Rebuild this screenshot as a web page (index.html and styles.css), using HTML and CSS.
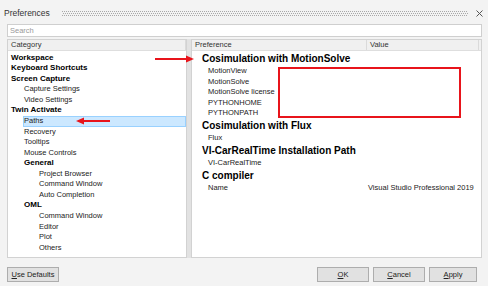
FILE: index.html
```html
<!DOCTYPE html>
<html>
<head>
<meta charset="utf-8">
<link rel="stylesheet" href="styles.css">
</head>
<body>
<div class="app">
  <div class="titlebar">
    <span class="title">Preferences</span>
    <span class="grip"></span>
    <svg class="close" width="7" height="7" viewBox="0 0 7 7"><path d="M0.5 0.5L6.5 6.5M6.5 0.5L0.5 6.5" stroke="#555" stroke-width="1"/></svg>
  </div>
  <div class="search">Search</div>
  <div class="panels">
    <div class="panel left">
      <div class="head"><span class="hcell">Category</span></div>
      <div class="tree">
        <div class="node l0 b">Workspace</div>
        <div class="node l0 b">Keyboard Shortcuts</div>
        <div class="node l0 b">Screen Capture</div>
        <div class="node l1">Capture Settings</div>
        <div class="node l1">Video Settings</div>
        <div class="node l0 b">Twin Activate</div>
        <div class="node l1 sel">Paths</div>
        <div class="node l1">Recovery</div>
        <div class="node l1">Tooltips</div>
        <div class="node l1">Mouse Controls</div>
        <div class="node l1 b">General</div>
        <div class="node l2">Project Browser</div>
        <div class="node l2">Command Window</div>
        <div class="node l2">Auto Completion</div>
        <div class="node l1 b">OML</div>
        <div class="node l2">Command Window</div>
        <div class="node l2">Editor</div>
        <div class="node l2">Plot</div>
        <div class="node l2">Others</div>
      </div>
    </div>
    <div class="splitter"></div>
    <div class="panel right">
      <div class="head cols">
        <span class="hcell pref">Preference</span>
        <span class="hcell val">Value</span>
        <span class="hcell tail"></span>
      </div>
      <div class="prefs">
        <div class="grp">Cosimulation with MotionSolve</div>
        <div class="item"><span class="k">MotionView</span><span class="v"></span></div>
        <div class="item"><span class="k">MotionSolve</span><span class="v"></span></div>
        <div class="item"><span class="k">MotionSolve license</span><span class="v"></span></div>
        <div class="item"><span class="k">PYTHONHOME</span><span class="v"></span></div>
        <div class="item"><span class="k">PYTHONPATH</span><span class="v"></span></div>
        <div class="grp">Cosimulation with Flux</div>
        <div class="item"><span class="k">Flux</span><span class="v"></span></div>
        <div class="grp">VI-CarRealTime Installation Path</div>
        <div class="item"><span class="k">VI-CarRealTime</span><span class="v"></span></div>
        <div class="grp">C compiler</div>
        <div class="item"><span class="k">Name</span><span class="v">Visual Studio Professional 2019</span></div>
      </div>
      <div class="redbox"></div>
    </div>
  </div>
  <div class="footer">
    <button class="btn"><u>U</u>se Defaults</button>
    <span class="spacer"></span>
    <button class="btn"><u>O</u>K</button>
    <button class="btn"><u>C</u>ancel</button>
    <button class="btn apply"><u>A</u>pply</button>
  </div>
  <svg class="arrow a1" width="40" height="8" viewBox="0 0 40 8"><path d="M0 4H33" stroke="#e8141b" stroke-width="2"/><path d="M31 0.5L39 4L31 7.5Z" fill="#e8141b"/></svg>
  <svg class="arrow a2" width="35" height="8" viewBox="0 0 35 8"><path d="M6 4H34" stroke="#e8141b" stroke-width="2"/><path d="M8 0.5L0 4L8 7.5Z" fill="#e8141b"/></svg>
</div>
</body>
</html>
```
FILE: styles.css
```css
* { box-sizing: border-box; }
html, body { margin: 0; padding: 0; }
body { background: #f3f3f3; }
.app {
  position: relative;
  width: 488px;
  height: 286px;
  background: #f3f3f3;
  font-family: "Liberation Sans", Arial, sans-serif;
  font-size: 7.5px;
  color: #222;
  display: flex;
  flex-direction: column;
  overflow: hidden;
}
.titlebar {
  height: 24px;
  padding: 2px 0 0 4px;
  display: flex;
  align-items: center;
}
.title { font-size: 8.5px; color: #333; }
.grip {
  margin-left: 12px;
  width: 406px;
  height: 5px;
  background-image:
    linear-gradient(90deg, #a9a9a9 1px, transparent 1px),
    linear-gradient(90deg, #a9a9a9 1px, transparent 1px),
    linear-gradient(90deg, #a9a9a9 1px, transparent 1px);
  background-size: 2px 1px, 2px 1px, 2px 1px;
  background-position: 0 0, 1px 2px, 0 4px;
  background-repeat: repeat-x;
}
.close { margin-left: 8px; }
.search {
  margin: 0 6px 0 7px;
  height: 13px;
  border: 1px solid #cfcfcf;
  background: #fff;
  color: #9a9a9a;
  padding-left: 2px;
  line-height: 11px;
}
.panels {
  margin: 2px 6px 0 7px;
  height: 219px;
  display: flex;
}
.panel {
  border: 1px solid #d2d2d2;
  background: #fff;
  position: relative;
}
.left { width: 180px; }
.splitter { width: 4px; background: #e2e2e2; }
.right { flex: 1; }
.head {
  height: 11px;
  background: #f0f0f0;
  border-bottom: 1px solid #dedede;
  display: flex;
}
.hcell {
  line-height: 10px;
  padding-left: 3px;
  color: #333;
  border-right: 1px solid #dadada;
  flex: 1;
}
.cols .pref { flex: 0 0 175px; }
.cols .val { flex: 1; }
.cols .tail { flex: 0 0 2px; padding: 0; border-right: none; }
.tree { padding-top: 1.75px; }
.node {
  height: 10.55px;
  line-height: 8.5px;
  border: 1px solid transparent;
  white-space: nowrap;
}
.node.b { font-weight: bold; font-size: 8px; color: #000; }
.l0 { margin-left: 2px; }
.l1 { margin-left: 15px; }
.l2 { margin-left: 30px; }
.node.sel { background: #cce8ff; border-color: #99d1ff; }
.prefs { padding-top: 0.5px; }
.grp {
  height: 14.5px;
  line-height: 14.5px;
  padding-left: 10px;
  font-weight: bold;
  font-size: 10px;
  color: #000;
  white-space: nowrap;
}
.item {
  height: 10.5px;
  line-height: 10.5px;
  display: flex;
  white-space: nowrap;
}
.item .k { flex: 0 0 176px; padding-left: 16px; }
.item .v { flex: 1; }
.redbox {
  position: absolute;
  left: 86px;
  top: 27px;
  width: 183px;
  height: 51px;
  border: 2px solid #e8141b;
}
.footer {
  margin: 9px 11px 0 7px;
  display: flex;
  gap: 4px;
}
.spacer { flex: 1; }
.btn {
  width: 52px;
  height: 15px;
  padding: 0;
  border: 1px solid #adadad;
  background: #e1e1e1;
  font-family: "Liberation Sans", Arial, sans-serif;
  font-size: 7.5px;
  color: #222;
  line-height: 13px;
}
.btn.apply { width: 48px; }
.arrow { position: absolute; }
.a1 { left: 155px; top: 55px; }
.a2 { left: 76px; top: 117px; }
```
